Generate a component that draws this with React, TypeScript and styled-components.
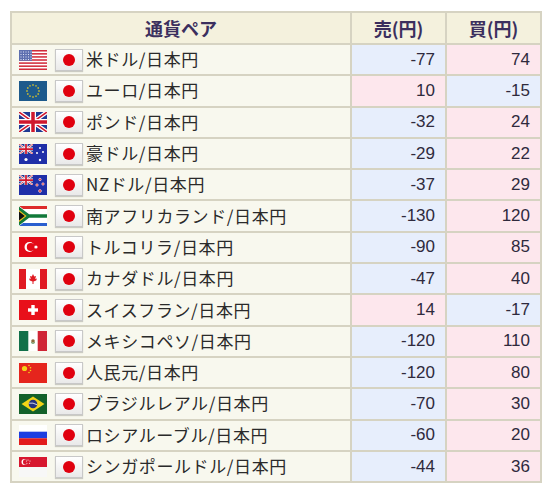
import React from "react";
import styled, { createGlobalStyle } from "styled-components";

const Global = createGlobalStyle`
  html, body {
    margin: 0;
    background: #ffffff;
  }
`;

const Page = styled.div`
  padding: 11px 0 0 10px;
  width: 552px;
  height: 483px;
  box-sizing: border-box;
  font-family: "Noto Sans CJK JP", "Liberation Sans", sans-serif;
`;

const Table = styled.table`
  border-collapse: collapse;
  width: 530px;
  table-layout: fixed;
  border: 2px solid #d6d3c2;
`;

const HeadCell = styled.th`
  height: 30px;
  padding: 0;
  background: #f4f1dd;
  border: 2px solid #d6d3c2;
  color: #3b2f5e;
  font-size: 18px;
  font-weight: bold;
  text-align: center;
`;

const Row = styled.tr`
  height: 31.3px;
`;

const NameCell = styled.td`
  padding: 0 0 0 7px;
  background: #f8f8ee;
  border: 2px solid #d6d3c2;
  color: #2a2a2a;
  font-size: 17px;
  white-space: nowrap;
`;

const NameInner = styled.div`
  display: flex;
  align-items: center;
  gap: 8px;
`;

const Label = styled.span`
  margin-left: -5px;
  padding-bottom: 2px;
  line-height: 1;
  letter-spacing: 0.6px;
`;

const ValueCell = styled.td<{ $plus: boolean }>`
  padding: 0 10px 0 0;
  background: ${(p) => (p.$plus ? "#fde7ed" : "#e7eefc")};
  border: 2px solid #d6d3c2;
  color: #2f2a3d;
  font-family: "Liberation Sans", Arial, sans-serif;
  font-size: 17px;
  text-align: right;
`;

const JpBox = styled.span`
  display: inline-flex;
  align-items: center;
  justify-content: center;
  flex: none;
  width: 28px;
  height: 22px;
  box-sizing: border-box;
  border: 1px solid #c8c8c8;
  background: linear-gradient(#ffffff, #e9e9e9);
  box-shadow: 0 1px 1px rgba(0, 0, 0, 0.18);
  &::after {
    content: "";
    width: 12px;
    height: 12px;
    border-radius: 50%;
    background: #e0000f;
  }
`;

const FlagSvg = styled.svg`
  display: block;
  flex: none;
`;

const uk = (
  <g>
    <rect width="28" height="20" fill="#1f3a93" />
    <path d="M0 0L28 20M28 0L0 20" stroke="#fff" strokeWidth="4" />
    <path d="M0 0L28 20M28 0L0 20" stroke="#d0182d" strokeWidth="1.5" />
    <path d="M14 0V20M0 10H28" stroke="#fff" strokeWidth="6" />
    <path d="M14 0V20M0 10H28" stroke="#d0182d" strokeWidth="3.5" />
  </g>
);

function Flag({ code }: { code: string }) {
  let body: React.ReactNode = null;
  switch (code) {
    case "us":
      body = (
        <g>
          <rect width="28" height="20" fill="#fff" />
          {[0, 2, 4, 6, 8, 10, 12].map((i) => (
            <rect key={i} y={i * 1.54} width="28" height="1.54" fill="#d22b3a" />
          ))}
          <rect width="13" height="10.8" fill="#5e6fb0" />
          {[1.5, 4, 6.5, 9].map((y) =>
            [1.5, 4, 6.5, 9, 11.5].map((x) => (
              <rect key={`${x}-${y}`} x={x} y={y} width="1" height="1" fill="#dfe4f5" />
            ))
          )}
        </g>
      );
      break;
    case "eu":
      body = (
        <g>
          <rect width="28" height="20" fill="#1d5a8c" />
          {Array.from({ length: 12 }).map((_, i) => {
            const a = (i / 12) * Math.PI * 2;
            return (
              <circle key={i} cx={14 + Math.cos(a) * 6} cy={10 + Math.sin(a) * 6} r="0.9" fill="#b8b33c" />
            );
          })}
        </g>
      );
      break;
    case "gb":
      body = uk;
      break;
    case "au":
    case "nz":
      body = (
        <g>
          <rect width="28" height="20" fill="#1f2fa8" />
          <svg width="14" height="10" viewBox="0 0 28 20" preserveAspectRatio="none">
            {uk}
          </svg>
          {code === "au" ? (
            <g fill="#fff">
              <circle cx="7" cy="15.5" r="1.6" />
              <circle cx="21" cy="4" r="1" />
              <circle cx="18" cy="9" r="1" />
              <circle cx="24" cy="8" r="1" />
              <circle cx="21" cy="16" r="1.2" />
            </g>
          ) : (
            <g fill="#d22" stroke="#fff" strokeWidth="0.6">
              <circle cx="21" cy="4.5" r="1.2" />
              <circle cx="18" cy="10" r="1.2" />
              <circle cx="24" cy="9" r="1.2" />
              <circle cx="21" cy="16" r="1.4" />
            </g>
          )}
        </g>
      );
      break;
    case "za":
      body = (
        <g>
          <rect width="28" height="10" fill="#dd2b2b" />
          <rect y="10" width="28" height="10" fill="#2a5fcf" />
          <path d="M0 0L12 10L0 20" fill="#fff" />
          <path d="M0 3H28V17H0Z" fill="#fff" />
          <path d="M0 0L11 8H28V12H11L0 20Z" fill="#fff" />
          <path d="M0 1.5L10 9H28V11H10L0 18.5Z" fill="#127a3a" stroke="#127a3a" strokeWidth="1.5" />
          <path d="M0 4L7.5 10L0 16Z" fill="#f1c21b" />
          <path d="M0 5.5L5.8 10L0 14.5Z" fill="#111" />
        </g>
      );
      break;
    case "tr":
      body = (
        <g>
          <rect width="28" height="20" fill="#e30a17" />
          <circle cx="10.5" cy="10" r="5" fill="#fff" />
          <circle cx="11.8" cy="10" r="4" fill="#e30a17" />
          <circle cx="17" cy="10" r="1.6" fill="#fff" />
        </g>
      );
      break;
    case "ca":
      body = (
        <g>
          <rect width="28" height="20" fill="#fff" />
          <rect width="7" height="20" fill="#e01a22" />
          <rect x="21" width="7" height="20" fill="#e01a22" />
          <path d="M14 5L15.2 7.5L17 7L16.2 10L18 9.5L17.2 11.5L14.5 12.5V15H13.5V12.5L10.8 11.5L10 9.5L11.8 10L11 7L12.8 7.5Z" fill="#e01a22" />
        </g>
      );
      break;
    case "ch":
      body = (
        <g>
          <rect width="28" height="20" fill="#e8101a" />
          <rect x="12.3" y="5" width="3.4" height="10" fill="#fff" />
          <rect x="9" y="8.3" width="10" height="3.4" fill="#fff" />
        </g>
      );
      break;
    case "mx":
      body = (
        <g>
          <rect width="28" height="20" fill="#fff" />
          <rect width="9.3" height="20" fill="#11704a" />
          <rect x="18.7" width="9.3" height="20" fill="#cf2535" />
          <circle cx="14" cy="10" r="1.8" fill="#8a6a3a" />
          <path d="M12 11.5Q14 13.5 16 11.5" stroke="#3b7a3b" fill="none" strokeWidth="0.8" />
        </g>
      );
      break;
    case "cn":
      body = (
        <g>
          <rect width="28" height="20" fill="#e5251d" />
          <circle cx="5.5" cy="5.5" r="2.6" fill="#f4d21a" />
          <circle cx="10" cy="2.5" r="0.8" fill="#f4d21a" />
          <circle cx="11.5" cy="4.8" r="0.8" fill="#f4d21a" />
          <circle cx="11.5" cy="7.5" r="0.8" fill="#f4d21a" />
          <circle cx="10" cy="9.5" r="0.8" fill="#f4d21a" />
        </g>
      );
      break;
    case "br":
      body = (
        <g>
          <rect width="28" height="20" fill="#13612a" />
          <path d="M14 2.5L25.5 10L14 17.5L2.5 10Z" fill="#f2d417" />
          <circle cx="14" cy="10" r="4.3" fill="#24337f" />
          <path d="M9.9 9.2Q14 8.3 18.1 10.8" stroke="#fff" strokeWidth="0.8" fill="none" />
        </g>
      );
      break;
    case "ru":
      body = (
        <g>
          <rect width="28" height="6.7" fill="#fff" />
          <rect y="6.7" width="28" height="6.6" fill="#1c3ee0" />
          <rect y="13.3" width="28" height="6.7" fill="#e21b1b" />
        </g>
      );
      break;
    case "sg":
      body = (
        <g>
          <rect width="28" height="10" fill="#d7172f" />
          <rect y="10" width="28" height="10" fill="#f7f7f7" />
          <circle cx="5.5" cy="5" r="3" fill="#fff" />
          <circle cx="6.7" cy="5" r="2.7" fill="#d7172f" />
          <g fill="#fff">
            <circle cx="9" cy="3" r="0.55" />
            <circle cx="11" cy="4" r="0.55" />
            <circle cx="10.4" cy="6.3" r="0.55" />
            <circle cx="7.9" cy="6.3" r="0.55" />
            <circle cx="7.4" cy="4" r="0.55" />
          </g>
        </g>
      );
      break;
  }
  return (
    <FlagSvg width="28" height="20" viewBox="0 0 28 20">
      {body}
    </FlagSvg>
  );
}

const rows = [
  { code: "us", name: "米ドル", sell: -77, buy: 74 },
  { code: "eu", name: "ユーロ", sell: 10, buy: -15 },
  { code: "gb", name: "ポンド", sell: -32, buy: 24 },
  { code: "au", name: "豪ドル", sell: -29, buy: 22 },
  { code: "nz", name: "NZドル", sell: -37, buy: 29 },
  { code: "za", name: "南アフリカランド", sell: -130, buy: 120 },
  { code: "tr", name: "トルコリラ", sell: -90, buy: 85 },
  { code: "ca", name: "カナダドル", sell: -47, buy: 40 },
  { code: "ch", name: "スイスフラン", sell: 14, buy: -17 },
  { code: "mx", name: "メキシコペソ", sell: -120, buy: 110 },
  { code: "cn", name: "人民元", sell: -120, buy: 80 },
  { code: "br", name: "ブラジルレアル", sell: -70, buy: 30 },
  { code: "ru", name: "ロシアルーブル", sell: -60, buy: 20 },
  { code: "sg", name: "シンガポールドル", sell: -44, buy: 36 },
];

export default function App() {
  return (
    <Page>
      <Global />
      <Table>
        <colgroup>
          <col style={{ width: 340 }} />
          <col style={{ width: 95 }} />
          <col style={{ width: 95 }} />
        </colgroup>
        <thead>
          <tr>
            <HeadCell>通貨ペア</HeadCell>
            <HeadCell>売(円)</HeadCell>
            <HeadCell>買(円)</HeadCell>
          </tr>
        </thead>
        <tbody>
          {rows.map((r) => (
            <Row key={r.code}>
              <NameCell>
                <NameInner>
                  <Flag code={r.code} />
                  <JpBox />
                  <Label>{r.name}/日本円</Label>
                </NameInner>
              </NameCell>
              <ValueCell $plus={r.sell > 0}>{r.sell}</ValueCell>
              <ValueCell $plus={r.buy > 0}>{r.buy}</ValueCell>
            </Row>
          ))}
        </tbody>
      </Table>
    </Page>
  );
}
